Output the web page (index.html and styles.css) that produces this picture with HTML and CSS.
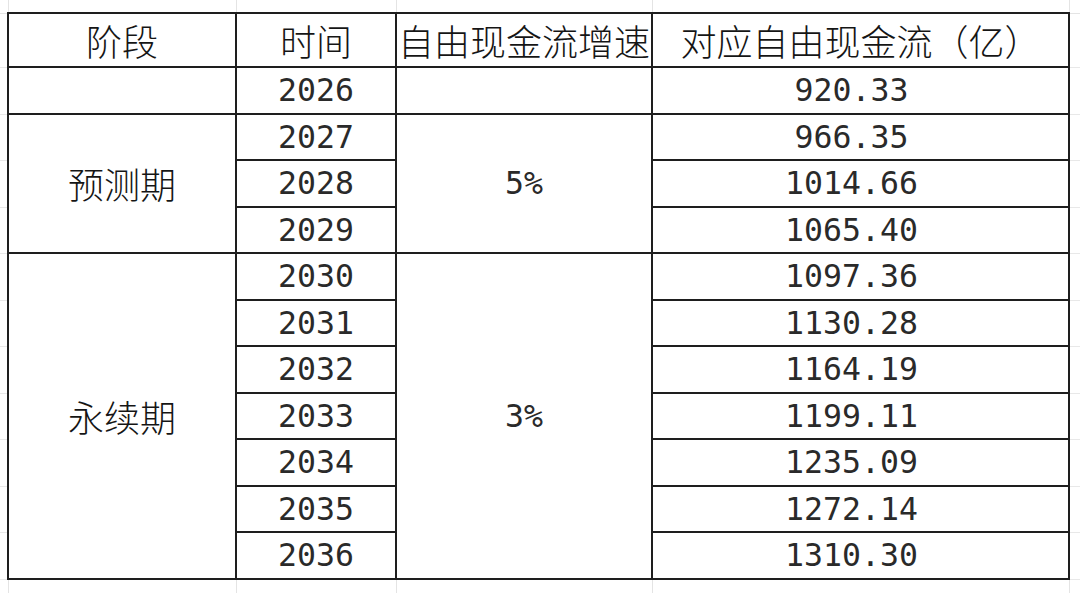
FILE: index.html
```html
<!DOCTYPE html>
<html lang="zh-CN">
<head>
<meta charset="utf-8">
<title>自由现金流</title>
<link rel="stylesheet" href="styles.css">
</head>
<body>
<div class="sheet">
<table class="fcf">
  <colgroup>
    <col class="c1"><col class="c2"><col class="c3"><col class="c4">
  </colgroup>
  <thead>
    <tr class="head">
      <th class="zh">阶段</th>
      <th class="zh">时间</th>
      <th class="zh">自由现金流增速</th>
      <th class="zh">对应自由现金流（亿）</th>
    </tr>
  </thead>
  <tbody>
    <tr><td></td><td class="num">2026</td><td></td><td class="num val">920.33</td></tr>
    <tr><td class="zh" rowspan="3">预测期</td><td class="num">2027</td><td class="num" rowspan="3">5%</td><td class="num val">966.35</td></tr>
    <tr><td class="num">2028</td><td class="num val">1014.66</td></tr>
    <tr><td class="num">2029</td><td class="num val">1065.40</td></tr>
    <tr><td class="zh" rowspan="7">永续期</td><td class="num">2030</td><td class="num" rowspan="7">3%</td><td class="num val">1097.36</td></tr>
    <tr><td class="num">2031</td><td class="num val">1130.28</td></tr>
    <tr><td class="num">2032</td><td class="num val">1164.19</td></tr>
    <tr><td class="num">2033</td><td class="num val">1199.11</td></tr>
    <tr><td class="num">2034</td><td class="num val">1235.09</td></tr>
    <tr><td class="num">2035</td><td class="num val">1272.14</td></tr>
    <tr><td class="num">2036</td><td class="num val">1310.30</td></tr>
  </tbody>
</table>
</div>
</body>
</html>
```
FILE: styles.css
```css
html, body {
  margin: 0;
  padding: 0;
}
body {
  width: 1080px;
  height: 593px;
  overflow: hidden;
  background-color: #ffffff;
  background-image:
    linear-gradient(#e4e4e4, #e4e4e4),
    linear-gradient(#e4e4e4, #e4e4e4),
    linear-gradient(#e4e4e4, #e4e4e4),
    linear-gradient(#e4e4e4, #e4e4e4),
    linear-gradient(#e4e4e4, #e4e4e4),
    linear-gradient(#e4e4e4, #e4e4e4),
    repeating-linear-gradient(to bottom, #e8e8e8 0, #e8e8e8 1px, transparent 1px, transparent 46.545px);
  background-size:
    1px 100%, 1px 100%, 1px 100%, 1px 100%, 1px 100%,
    100% 1px,
    100% 100%;
  background-position:
    8px 0, 236px 0, 396px 0, 652px 0, 1069px 0,
    0 13px,
    0 67px;
  background-repeat: no-repeat;
  color: #111111;
}
.sheet {
  padding: 12px 0 0 7px;
}
.fcf {
  border-collapse: collapse;
  table-layout: fixed;
  width: 1063px;
  background: #ffffff;
}
.c1 { width: 228px; }
.c2 { width: 160px; }
.c3 { width: 256px; }
.c4 { width: 417px; }
.fcf th,
.fcf td {
  border: 2px solid #1e1e1e;
  padding: 0;
  text-align: center;
  vertical-align: middle;
  white-space: nowrap;
  overflow: visible;
  font-weight: normal;
}
.head th {
  height: 52px;
}
.fcf tbody td {
  height: 44.5px;
}
.fcf .zh {
  font-family: "Noto Sans CJK SC", "Noto Sans", sans-serif;
  font-size: 36px;
  font-weight: 300;
  line-height: 42px;
  color: #151515;
}
.fcf .num {
  font-family: "DejaVu Sans Mono", "Liberation Mono", monospace;
  font-size: 31.5px;
  line-height: 42px;
  color: #2a2a2a;
}
.fcf td.val {
  padding-right: 18px;
}
```
